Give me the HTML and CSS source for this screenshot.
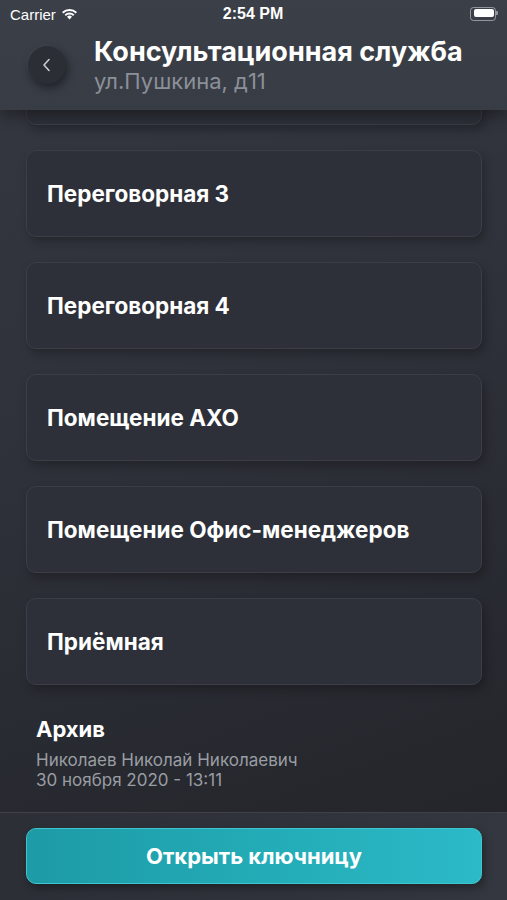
FILE: index.html
```html
<!DOCTYPE html>
<html>
<head>
	<meta charset="utf-8">
	<title>Консультационная служба</title>
	<link rel="stylesheet" href="styles.css">
</head>
<body>
	<div class="screen">
		<div class="top">
			<div class="status">
				<span class="carrier">Carrier
					<svg class="wifi" width="17" height="12" viewBox="0 0 17 12">
						<path d="M8.5 11.5 L6 8.8 A3.6 3.6 0 0 1 11 8.8 Z" fill="#fff"/>
						<path d="M3.6 6.6 A7 7 0 0 1 13.4 6.6 L12.1 8 A5.2 5.2 0 0 0 4.9 8 Z" fill="#fff"/>
						<path d="M1 4 A10.8 10.8 0 0 1 16 4 L14.7 5.4 A9 9 0 0 0 2.3 5.4 Z" fill="#fff"/>
					</svg>
				</span>
				<span class="time">2:54 PM</span>
				<span class="battery"><span class="level"></span></span>
			</div>
			<div class="header">
				<div class="back">
					<svg width="10" height="14" viewBox="0 0 10 14"><path d="M7 1.5 L2 7 L7 12.5" fill="none" stroke="#c9ccd2" stroke-width="1.6" stroke-linecap="round" stroke-linejoin="round"/></svg>
				</div>
				<div class="titles">
					<div class="title">Консультационная служба</div>
					<div class="subtitle">ул.Пушкина, д11</div>
				</div>
			</div>
		</div>

		<div class="scroll">
			<div class="list">
				<!-- scrolled away under the header -->
				<div class="room"></div>
				<div class="room">Переговорная 3</div>
				<div class="room">Переговорная 4</div>
				<div class="room">Помещение АХО</div>
				<div class="room">Помещение Офис-менеджеров</div>
				<div class="room">Приёмная</div>
			</div>
			<div class="archive">
				<div class="archive-title">Архив</div>
				<div class="archive-line">Николаев Николай Николаевич</div>
				<div class="archive-line">30 ноября 2020 - 13:11</div>
			</div>
		</div>

		<div class="bottom">
			<div class="open-btn">Открыть ключницу</div>
		</div>
	</div>
</body>
</html>
```

FILE: styles.css
```css
*{
	box-sizing: border-box;
}
body{
	margin: 0;
	background: #2a2d34;
	font-family: Inter, 'Noto Sans', sans-serif;
	color: #fff;
}
.screen{
	width: 507px;
	height: 900px;
	display: flex;
	flex-direction: column;
	overflow: hidden;
	background: linear-gradient(160deg, #353840 0%, #2f323a 40%, #25272d 85%, #222429 100%);
}
.top{
	height: 110px;
	flex-shrink: 0;
	background: linear-gradient(180deg, #3b3f48, #383c45);
	box-shadow: 0 6px 14px rgba(0,0,0,0.35);
	position: relative;
	z-index: 2;
}
.status{
	height: 28px;
	display: flex;
	align-items: center;
	justify-content: space-between;
	padding: 0 11px 0 10px;
	font-family: 'Liberation Sans', sans-serif;
	font-size: 15px;
}
.carrier{
	display: flex;
	align-items: center;
	gap: 5px;
	width: 90px;
}
.time{
	font-weight: bold;
	font-size: 16px;
}
.battery{
	width: 90px;
	display: flex;
	justify-content: flex-end;
	position: relative;
}
.battery::before{
	content: '';
	width: 24px;
	height: 12px;
	border: 1px solid rgba(255,255,255,0.45);
	border-radius: 3.5px;
}
.battery::after{
	content: '';
	position: absolute;
	right: -2px;
	top: 4px;
	width: 2px;
	height: 4px;
	background: rgba(255,255,255,0.45);
	border-radius: 0 1px 1px 0;
}
.battery .level{
	position: absolute;
	right: 2px;
	top: 2px;
	width: 20px;
	height: 8px;
	background: #fff;
	border-radius: 2px;
}
.header{
	display: flex;
	align-items: flex-start;
	padding: 8px 0 0 28px;
	gap: 28px;
}
.back{
	width: 38px;
	height: 38px;
	margin-top: 10px;
	border-radius: 50%;
	background: #2b2e35;
	box-shadow: 2px 4px 8px rgba(0,0,0,0.45), -1px -1px 2px rgba(255,255,255,0.05);
	display: flex;
	align-items: center;
	justify-content: center;
	flex-shrink: 0;
}
.title{
	font-size: 27px;
	font-weight: 700;
	line-height: 32px;
	white-space: nowrap;
}
.subtitle{
	font-size: 22px;
	color: #8c9098;
	line-height: 26px;
	white-space: nowrap;
}
.scroll{
	flex: 1;
	overflow: hidden;
}
.list{
	margin-top: -72px;
	padding: 0 25px 0 26px;
	display: flex;
	flex-direction: column;
	gap: 25px;
}
.room{
	height: 87px;
	display: flex;
	align-items: center;
	padding-left: 20px;
	border-radius: 10px;
	background: #2d3038;
	border: 1px solid #3b3e47;
	box-shadow: 3px 5px 10px rgba(0,0,0,0.25);
	font-size: 22.5px;
	font-weight: 700;
}
.archive{
	padding: 29px 36px 0;
}
.archive-title{
	font-size: 22px;
	font-weight: 700;
	line-height: 30px;
	margin-bottom: 6px;
}
.archive-line{
	font-size: 17px;
	color: #9a9da3;
	line-height: 20px;
}
.bottom{
	height: 88px;
	flex-shrink: 0;
	background: linear-gradient(90deg, #2c2f36, #30333b 60%, #34373f);
	border-top: 1px solid #3f424a;
	padding: 15px 25px 0 26px;
}
.open-btn{
	height: 56px;
	border-radius: 10px;
	background: linear-gradient(90deg, #1d9ba6, #24aeb9 60%, #2cb9c8);
	border: 1px solid #3ec6d0;
	box-shadow: 2px 4px 8px rgba(0,0,0,0.35);
	display: flex;
	align-items: center;
	justify-content: center;
	font-size: 22px;
	font-weight: 700;
}
```
